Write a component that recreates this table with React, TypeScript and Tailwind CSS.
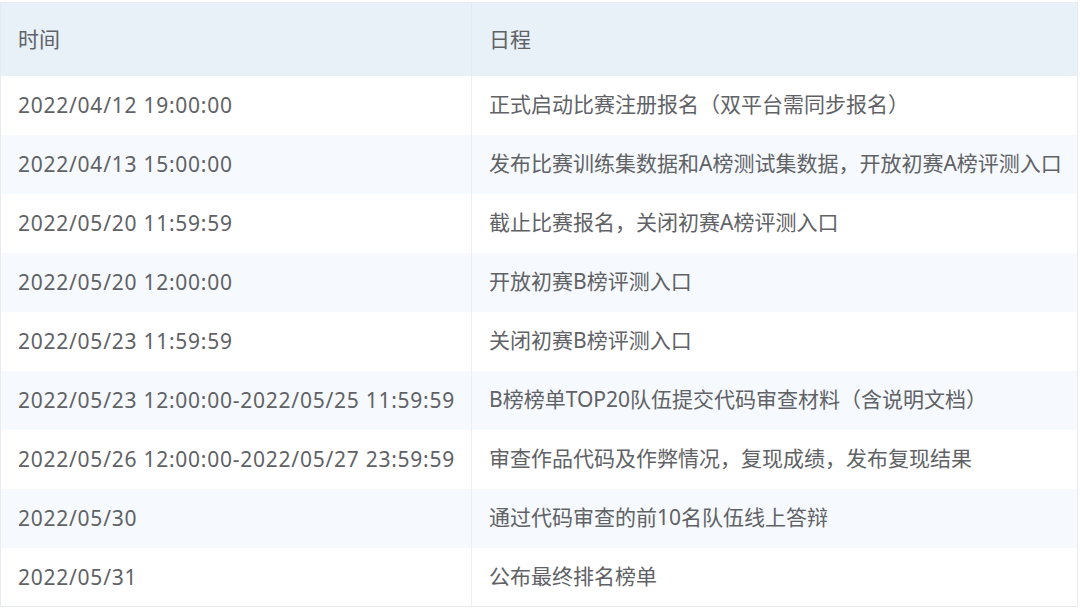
const rows: [string, string][] = [
  ['2022/04/12 19:00:00', '正式启动比赛注册报名（双平台需同步报名）'],
  ['2022/04/13 15:00:00', '发布比赛训练集数据和A榜测试集数据，开放初赛A榜评测入口'],
  ['2022/05/20 11:59:59', '截止比赛报名，关闭初赛A榜评测入口'],
  ['2022/05/20 12:00:00', '开放初赛B榜评测入口'],
  ['2022/05/23 11:59:59', '关闭初赛B榜评测入口'],
  ['2022/05/23 12:00:00-2022/05/25 11:59:59', 'B榜榜单TOP20队伍提交代码审查材料（含说明文档）'],
  ['2022/05/26 12:00:00-2022/05/27 23:59:59', '审查作品代码及作弊情况，复现成绩，发布复现结果'],
  ['2022/05/30', '通过代码审查的前10名队伍线上答辩'],
  ['2022/05/31', '公布最终排名榜单'],
]

export default function App() {
  return (
    <div
      className="w-[1080px] h-[608px] bg-white pt-[2px] overflow-hidden"
      style={{ fontFamily: '"Noto Sans", "Noto Sans CJK SC", sans-serif' }}
    >
      <table className="w-[1078px] border-collapse border border-[#e9ebf2] text-[21px] text-[#606266] table-fixed">
        <colgroup>
          <col className="w-[471px]" />
          <col />
        </colgroup>
        <thead>
          <tr className="bg-[#e8f0f8] h-[73px]">
            <th className="text-left font-normal pl-[17px] border-r border-[#e4e9f0]">时间</th>
            <th className="text-left font-normal pl-[17px]">日程</th>
          </tr>
        </thead>
        <tbody>
          {rows.map(([time, desc], i) => (
            <tr key={i} className={`h-[59px] ${i % 2 === 1 ? 'bg-[#f6f9fd]' : 'bg-white'}`}>
              <td className="pl-[17px] pt-[2px] whitespace-nowrap tracking-[0.75px] border-r border-[#eceef4]">{time}</td>
              <td className="pl-[17px] whitespace-nowrap">{desc}</td>
            </tr>
          ))}
        </tbody>
      </table>
    </div>
  )
}
